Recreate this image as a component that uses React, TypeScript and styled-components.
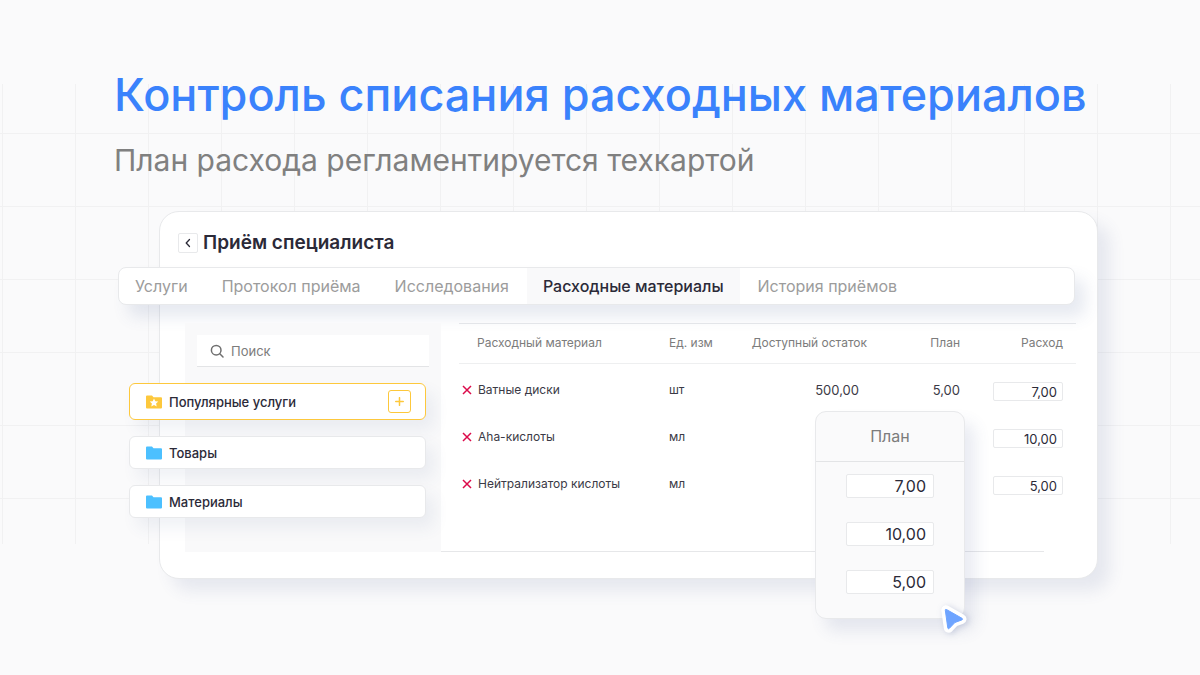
import React from "react";
import styled, { createGlobalStyle } from "styled-components";

const color = {
  page: "#fafafb",
  line: "#e8e9eb",
  grid: "#f1f1f2",
  ink: "#2b2a38",
  text: "#3b3a46",
  muted: "#7c7c7c",
  tab: "#9c9c9c",
  blue: "#3a82fc",
  amber: "#fdc83c",
  sky: "#4cc0ff",
  red: "#dc0a4a",
};

const GlobalStyle = createGlobalStyle`
  *, *::before, *::after { box-sizing: border-box; }
  body {
    margin: 0;
    background: ${color.page};
    color: ${color.text};
    font-family: Inter, "Noto Sans", sans-serif;
  }
  button, input { font: inherit; color: inherit; }
  button { cursor: pointer; }
`;

const Page = styled.main`
  min-height: 100vh;
  padding: 67px 102px 56px 114px;
  background-image:
    repeating-linear-gradient(to right, ${color.grid} 0 1px, transparent 1px 73px),
    repeating-linear-gradient(to bottom, ${color.grid} 0 1px, transparent 1px 73px);
  background-size: 100% 460px, 100% 367px;
  background-position: 2px 84px, 0 133px;
  background-repeat: no-repeat;
`;

const Headline = styled.h1`
  margin: 0;
  color: ${color.blue};
  font-size: 45px;
  line-height: 56px;
  font-weight: 500;
  white-space: nowrap;
`;

const Subtitle = styled.p`
  margin: 17px 0 0;
  color: #808080;
  font-size: 30px;
  line-height: 40px;
  white-space: nowrap;
`;

const Card = styled.section`
  position: relative;
  margin: 31px 0 0 45px;
  padding-bottom: 26px;
  background: #fff;
  border: 1px solid ${color.line};
  border-radius: 20px;
  box-shadow: 12px 12px 16px rgba(70, 90, 150, 0.11);
`;

const CardHeader = styled.header`
  display: flex;
  align-items: center;
  gap: 5px;
  padding: 18px 18px 12px;
`;

const BackButton = styled.button`
  display: grid;
  place-items: center;
  width: 20px;
  height: 20px;
  padding: 0;
  background: #fff;
  border: 1px solid ${color.line};
  border-radius: 2px;
`;

const CardTitle = styled.h2`
  margin: 0;
  color: ${color.ink};
  font-size: 19px;
  line-height: 25px;
  font-weight: 600;
`;

const Tabs = styled.div`
  display: flex;
  gap: 2px;
  height: 38px;
  margin: 0 22px 0 -42px;
  background: #fff;
  border: 1px solid ${color.line};
  border-radius: 8px;
  box-shadow: 10px 12px 16px rgba(70, 90, 150, 0.13);
`;

const Tab = styled.button<{ $active?: boolean }>`
  padding: 0 16px;
  background: ${(p) => (p.$active ? "#f9f9fa" : "transparent")};
  border: 0;
  color: ${(p) => (p.$active ? color.ink : color.tab)};
  font-size: 16px;
  line-height: 20px;
  font-weight: ${(p) => (p.$active ? 500 : 400)};
  white-space: nowrap;
`;

const Body = styled.div`
  display: flex;
  align-items: stretch;
  margin: 18px 21px 0 25px;
`;

const Sidebar = styled.aside`
  flex: 0 0 256px;
  min-width: 0;
  width: 256px;
  height: 229px;
  padding: 12px;
  background: #f9f9fa;
`;

const Search = styled.label`
  display: flex;
  align-items: center;
  gap: 7px;
  height: 32px;
  padding: 0 13px;
  background: #fff;
  border-bottom: 1px solid #e3e4e6;
  color: ${color.muted};
`;

const SearchInput = styled.input`
  flex: 1;
  min-width: 0;
  padding: 0;
  background: transparent;
  border: 0;
  outline: 0;
  font-size: 13px;
  line-height: 20px;
  &::placeholder { color: ${color.muted}; opacity: 1; }
`;

const Folders = styled.ul`
  display: flex;
  flex-direction: column;
  gap: 16px;
  margin: 16px 3px 0 -68px;
  padding: 0;
  list-style: none;
`;

const Folder = styled.li<{ $active?: boolean }>`
  display: flex;
  align-items: center;
  gap: 7px;
  height: ${(p) => (p.$active ? 37 : 33)}px;
  padding: 0 14px 0 16px;
  background: #fff;
  border: 1px solid ${(p) => (p.$active ? color.amber : color.line)};
  border-radius: 6px;
  box-shadow: 8px 10px 16px rgba(70, 90, 140, 0.08);
`;

const FolderName = styled.span`
  flex: 1;
  color: ${color.ink};
  font-size: 13px;
  line-height: 20px;
  font-weight: 500;
`;

const AddButton = styled.button`
  display: grid;
  place-items: center;
  width: 23px;
  height: 23px;
  padding: 0;
  background: #fff;
  border: 1px solid ${color.amber};
  border-radius: 3px;
`;

const Content = styled.div`
  flex: 1;
  min-width: 0;
  display: flex;
  flex-direction: column;
  justify-content: space-between;
  padding-left: 18px;
`;

const FooterRule = styled.hr`
  width: auto;
  height: 1px;
  margin: 0 32px 0 -18px;
  background: #e6e7e9;
  border: 0;
`;

const Table = styled.table`
  width: 100%;
  table-layout: fixed;
  border-collapse: separate;
  border-spacing: 0;
  font-size: 12px;
  line-height: 20px;
`;

const Th = styled.th<{ $end?: boolean; $edge?: boolean; $first?: boolean }>`
  height: 41px;
  padding: 0 ${(p) => (p.$edge ? 13 : 0)}px 2px ${(p) => (p.$first ? 18 : 0)}px;
  border-top: 1px solid #e3e5e9;
  border-bottom: 1px solid #eeeff0;
  color: ${color.muted};
  font-weight: 400;
  text-align: ${(p) => (p.$end ? "right" : "left")};
  white-space: nowrap;
`;

const Td = styled.td`
  height: 47px;
  padding: 0 0 3px;
  white-space: nowrap;
`;

const NumberCell = styled(Td)<{ $inset?: number }>`
  padding-right: ${(p) => p.$inset ?? 0}px;
  font-size: 13px;
  text-align: right;
`;

const InputCell = styled(Td)`
  padding: 0 13px 0 0;
`;

const Tbody = styled.tbody`
  &::before { content: ""; display: table-row; height: 4px; }
`;

const Material = styled.div`
  display: flex;
  align-items: center;
  gap: 6px;
  padding-left: 3px;
`;

const RemoveButton = styled.button`
  display: grid;
  place-items: center;
  padding: 0;
  background: none;
  border: 0;
`;

const ValueInput = styled.input<{ $large?: boolean }>`
  display: block;
  width: ${(p) => (p.$large ? 88 : 70)}px;
  height: ${(p) => (p.$large ? 24 : 19)}px;
  margin-left: auto;
  padding: 0 ${(p) => (p.$large ? 7 : 5)}px;
  background: #fff;
  border: 1px solid ${color.line};
  border-radius: 2px;
  outline: 0;
  color: ${color.ink};
  font-size: ${(p) => (p.$large ? 16 : 13)}px;
  text-align: right;
`;

const PlanPopup = styled.div`
  position: absolute;
  top: 199px;
  right: 132px;
  width: 150px;
  background: #fafafb;
  border: 1px solid ${color.line};
  border-radius: 11px;
  box-shadow: 10px 12px 16px rgba(70, 90, 150, 0.12);
`;

const PlanTitle = styled.h3`
  margin: 0;
  padding: 14px 0 15px;
  border-bottom: 1px solid #e3e4e6;
  color: ${color.muted};
  font-size: 16px;
  line-height: 20px;
  font-weight: 400;
  text-align: center;
`;

const PlanValues = styled.div`
  display: grid;
  gap: 24px;
  padding: 12px 30px 24px;
`;

const Pointer = styled.svg`
  position: absolute;
  right: -12px;
  bottom: -20px;
  overflow: visible;
  filter: drop-shadow(2px 1px 3px rgba(70, 90, 150, 0.25));
`;

const TABS = ["Услуги", "Протокол приёма", "Исследования", "Расходные материалы", "История приёмов"];

const ROWS = [
  { name: "Ватные диски", unit: "шт", stock: "500,00", plan: "5,00", used: "7,00" },
  { name: "Aha-кислоты", unit: "мл", stock: "", plan: "", used: "10,00" },
  { name: "Нейтрализатор кислоты", unit: "мл", stock: "", plan: "", used: "5,00" },
];

const PLAN = ["7,00", "10,00", "5,00"];

const POINTER_PATH =
  "M10.500 11.500 26 20.300c.8.500.7 1.300-.1 1.600l-7 2.600-5.500 5.800c-.7.700-1.500.5-1.600-.4L9.300 12.300c-.1-.9.500-1.200 1.200-.8Z";

const FolderIcon = ({ fill, star }: { fill: string; star?: boolean }) => (
  <svg width="16" height="14" viewBox="0 0 16 14" aria-hidden="true">
    <path d="M1 .5h5l1.500 1.700H15a1 1 0 0 1 1 1v9.300a1 1 0 0 1-1 1H1a1 1 0 0 1-1-1v-11a1 1 0 0 1 1-1Z" fill={fill} />
    {star && (
      <path
        d="m8 3.400 1.300 2.800 3 .4-2.200 2 .6 3L8 10.100l-2.700 1.500.6-3-2.200-2 3-.4Z"
        fill="#fff"
      />
    )}
  </svg>
);

export default function App() {
  return (
    <>
      <GlobalStyle />
      <Page>
        <Headline>Контроль списания расходных материалов</Headline>
        <Subtitle>План расхода регламентируется техкартой</Subtitle>

        <Card>
          <CardHeader>
            <BackButton aria-label="Назад">
              <svg width="6" height="10" viewBox="0 0 6 10" fill="none" aria-hidden="true">
                <path d="M4.500 1.500 1.200 5l3.300 3.500" stroke={color.ink} strokeWidth="1.300" strokeLinecap="round" strokeLinejoin="round" />
              </svg>
            </BackButton>
            <CardTitle>Приём специалиста</CardTitle>
          </CardHeader>

          <Tabs role="tablist">
            {TABS.map((t, i) => (
              <Tab key={t} role="tab" aria-selected={i === 3} $active={i === 3}>
                {t}
              </Tab>
            ))}
          </Tabs>

          <Body>
            <Sidebar>
              <Search>
                <svg width="14" height="14" viewBox="0 0 14 14" fill="none" stroke="#6f6f6f" strokeWidth="1.500" strokeLinecap="round" aria-hidden="true">
                  <circle cx="6.200" cy="6.200" r="4.800" />
                  <path d="m9.800 9.800 3.200 3.200" />
                </svg>
                <SearchInput type="text" placeholder="Поиск" aria-label="Поиск" />
              </Search>
              <Folders>
                <Folder $active>
                  <FolderIcon fill={color.amber} star />
                  <FolderName>Популярные услуги</FolderName>
                  <AddButton aria-label="Добавить">
                    <svg width="9" height="9" viewBox="0 0 9 9" stroke={color.amber} strokeWidth="1.500" strokeLinecap="round" aria-hidden="true">
                      <path d="M4.500.7v7.600M.7 4.500h7.600" />
                    </svg>
                  </AddButton>
                </Folder>
                <Folder>
                  <FolderIcon fill={color.sky} />
                  <FolderName>Товары</FolderName>
                </Folder>
                <Folder>
                  <FolderIcon fill={color.sky} />
                  <FolderName>Материалы</FolderName>
                </Folder>
              </Folders>
            </Sidebar>

            <Content>
              <Table>
                <colgroup>
                  <col />
                  <col style={{ width: 56 }} />
                  <col style={{ width: 142 }} />
                  <col style={{ width: 93 }} />
                  <col style={{ width: 116 }} />
                </colgroup>
                <thead>
                  <tr>
                    <Th $first>Расходный материал</Th>
                    <Th>Ед. изм</Th>
                    <Th $end>Доступный остаток</Th>
                    <Th $end>План</Th>
                    <Th $end $edge>Расход</Th>
                  </tr>
                </thead>
                <Tbody>
                  {ROWS.map((r) => (
                    <tr key={r.name}>
                      <Td>
                        <Material>
                          <RemoveButton aria-label={`Удалить: ${r.name}`}>
                            <svg width="10" height="10" viewBox="0 0 10 10" stroke={color.red} strokeWidth="1.500" aria-hidden="true">
                              <path d="m1 1 8 8M9 1 1 9" />
                            </svg>
                          </RemoveButton>
                          {r.name}
                        </Material>
                      </Td>
                      <Td>{r.unit}</Td>
                      <NumberCell $inset={8}>{r.stock}</NumberCell>
                      <NumberCell>{r.plan}</NumberCell>
                      <InputCell>
                        <ValueInput type="text" defaultValue={r.used} aria-label={`Расход: ${r.name}`} />
                      </InputCell>
                    </tr>
                  ))}
                </Tbody>
              </Table>
              <FooterRule />
            </Content>
          </Body>

          <PlanPopup>
            <PlanTitle>План</PlanTitle>
            <PlanValues>
              {PLAN.map((v, i) => (
                <ValueInput key={v} $large type="text" defaultValue={v} aria-label={`План: ${ROWS[i].name}`} />
              ))}
            </PlanValues>
            <Pointer width="40" height="40" viewBox="0 0 40 40" aria-hidden="true">
              <path d={POINTER_PATH} fill="#fff" stroke="#fff" strokeWidth="8" strokeLinejoin="round" />
              <path d={POINTER_PATH} fill="#6ea4ff" stroke="#6ea4ff" strokeWidth="1" strokeLinejoin="round" />
            </Pointer>
          </PlanPopup>
        </Card>
      </Page>
    </>
  );
}
